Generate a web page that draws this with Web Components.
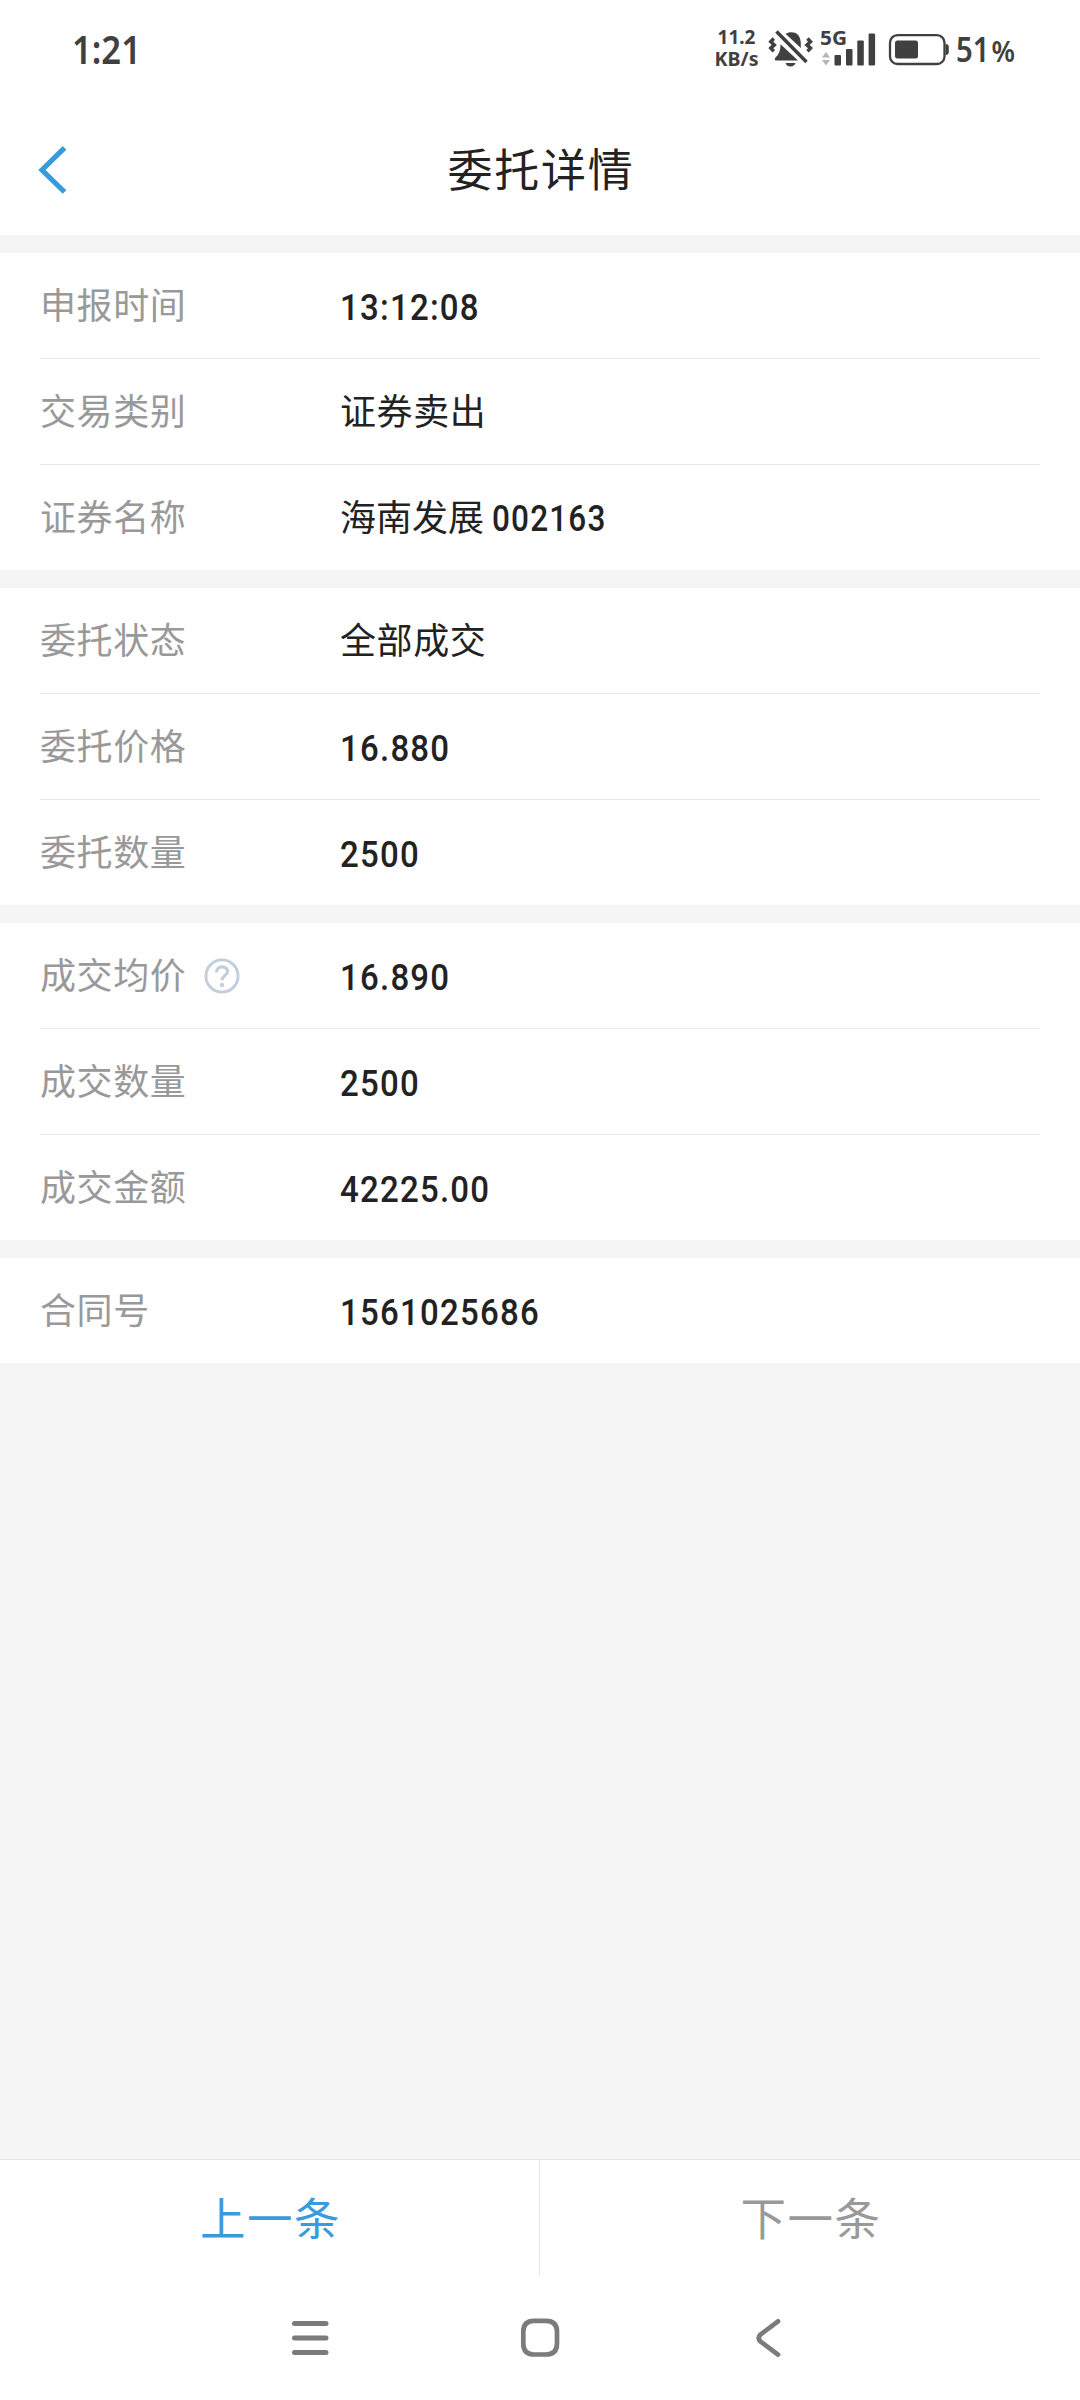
<!DOCTYPE html>
<html lang="zh-CN">
<head>
<meta charset="utf-8">
<title>委托详情</title>
<style>
html,body{margin:0;padding:0;background:#f5f5f5}
body{width:1080px;height:2400px;overflow:hidden;font-family:"Noto Sans CJK SC",sans-serif;color:#222}
</style>
</head>
<body>
<order-page></order-page>
<script>
const define=(name,html)=>{
  const t=document.createElement('template');t.innerHTML=html;
  customElements.define(name,class extends HTMLElement{
    constructor(){super();this.attachShadow({mode:'open'}).append(t.content.cloneNode(true));}
  });
};

define('status-bar',`<style>
:host{display:flex;height:100px;box-sizing:border-box;align-items:center;justify-content:space-between;padding:0 60px 0 70px;color:#404040;font-family:"Noto Sans",sans-serif;font-weight:600}
.icons{display:flex;align-items:center}
svg{display:block;flex:none}
</style>
<svg width="80" height="60" viewBox="70 20 80 60" fill="#404040" font-family="Noto Sans,sans-serif" font-weight="600"><text x="72" y="64" font-size="39" textLength="69" lengthAdjust="spacingAndGlyphs">1:21</text></svg>
<div class="icons">
<svg width="50" height="60" viewBox="711 20 50 60" fill="#404040" font-family="Noto Sans,sans-serif" font-weight="700" font-size="19"><text x="717.500" y="44" textLength="38" lengthAdjust="spacingAndGlyphs">11.2</text><text x="714.500" y="66" textLength="44" lengthAdjust="spacingAndGlyphs">KB/s</text></svg>
<svg width="56" height="60" viewBox="761 20 56 60" fill="#404040"><path d="M785.500 33.800C788 32 792 31.700 795 32.800C799 34.500 800.800 39 800.800 43.500V48ZM780.500 44.300L798 60.600H776C774.500 60.600 774.300 58.600 775.500 57.500C779 54.500 780.500 50.500 780.500 44.300ZM785.500 63H795.500Q794.500 66.400 790.500 66.400T785.500 63Z"/><path d="M776.500 31.500L806.500 62M773.800 38.500L770.800 41.700L774.300 44.900L770.800 48.100L773.800 51.300M807.500 38.500L810.500 41.700L807 44.900L810.500 48.100L807.500 51.300" fill="none" stroke="#404040" stroke-width="3.500"/></svg>
<svg width="66" height="60" viewBox="817 20 66 60" fill="#404040"><text x="820" y="45" font-family="Noto Sans,sans-serif" font-weight="700" font-size="19.500" textLength="27" lengthAdjust="spacingAndGlyphs">5G</text><path d="M822 57.500L826 52L830 57.500ZM822 60H830L826 65.500Z" fill="#b4b4b4"/><rect x="834.500" y="55" width="6.500" height="10.500" rx="1"/><rect x="846" y="49" width="6.500" height="16.500" rx="1"/><rect x="857.300" y="40.500" width="6.500" height="25" rx="1"/><rect x="868.600" y="33.500" width="6.500" height="32" rx="1"/></svg>
<svg width="71" height="60" viewBox="883 20 71 60"><rect x="890" y="35.200" width="54.500" height="28.800" rx="7.500" fill="none" stroke="#404040" stroke-width="2.300"/><rect x="895" y="40.500" width="23" height="18" rx="2.500" fill="#404040"/><path d="M945.500 44C947.800 44 948.800 45.200 948.800 47V52C948.800 54 947.800 55 945.500 55Z" fill="#404040"/></svg>
<svg width="66" height="60" viewBox="954 20 66 60" fill="#404040" font-family="Noto Sans,sans-serif"><text x="956" y="62" font-size="34.500" font-weight="600" textLength="33.500" lengthAdjust="spacingAndGlyphs">51</text><text x="991.500" y="62" font-size="28" font-weight="600" textLength="23.500" lengthAdjust="spacingAndGlyphs">%</text></svg>
</div>`);

define('nav-header',`<style>
:host{display:grid;grid-template-columns:100px 1fr 100px;align-items:center;height:135px;color:#222}
h1{margin:0;text-align:center;font:400 45px/60px "Noto Sans CJK SC",sans-serif;letter-spacing:1.700px;text-indent:2px}
svg{display:block}
</style>
<svg width="100" height="135" viewBox="0 100 100 135"><path d="M64.500 147.800L42 170L64.500 192" fill="none" stroke="#3a9bdc" stroke-width="5.200"/></svg>
<h1><slot></slot></h1>`);

define('info-group',`<style>
:host{display:flex;flex-direction:column;gap:1px;background:#fff;padding:0 40px;margin-top:18px}
::slotted(:not(:last-child)){box-shadow:0 1px #e9e9e9}
</style><slot></slot>`);

define('info-row',`<style>
:host{display:flex;align-items:center;height:105px;font-size:36px;letter-spacing:.600px;line-height:50px;white-space:nowrap}
.label{display:flex;align-items:center;width:300px;color:#999}
.label slot[name=label]{display:block;padding-bottom:5px}
.label slot[name=icon]{display:block;padding-left:18px}
.value{color:#222;padding-bottom:5px}
:host([tight]) .value{letter-spacing:0}
</style><div class="label"><slot name="label"></slot><slot name="icon"></slot></div><div class="value"><slot></slot></div>`);

define('din-number',`<style>
:host{display:inline-block;font:500 37.500px/50px Roboto,sans-serif;letter-spacing:1.400px;padding-top:8px;transform:scaleX(.88);transform-origin:0 50%}
:host([inline]){height:50px;margin:0 0 -10px 0;padding-top:0;vertical-align:top;transform:translateY(3px) scaleX(.84)}
</style><slot></slot>`);

define('help-icon',`<style>:host{display:block}svg{display:block}</style>
<svg width="36" height="36" viewBox="0 0 36 36" fill="none" stroke="#c2cedc"><circle cx="18" cy="18" r="16.100" stroke-width="2.900"/><path d="M12.500 14.500C12.500 7 23.800 7.200 23.500 13.800C23.300 17.500 18 17.500 18 22.300" stroke-width="3.200"/><circle cx="18" cy="27" r="2.200" fill="#c2cedc" stroke="none"/></svg>`);

define('pager-bar',`<style>
:host{display:flex;height:117px;box-sizing:border-box;border-top:1px solid #e6e6e6;background:#fff;font-size:45.500px;line-height:60px;letter-spacing:1.500px}
div{display:flex;align-items:center;justify-content:center;box-sizing:border-box;padding:0 0 5px 2px;width:540px}
.prev{color:#3a9bdc;border-right:1px solid #e6e6e6}
.next{color:#999}
</style><div class="prev"><slot name="prev"></slot></div><div class="next"><slot name="next"></slot></div>`);

define('system-nav',`<style>
:host{display:flex;justify-content:center;gap:170px;height:124px;background:#fff;align-items:center}
svg{display:block}
</style>
<svg width="60" height="60" viewBox="280 2308 60 60" stroke="#7b7b7b" stroke-width="5" stroke-linecap="round"><path d="M294.500 2323.500H326M294.500 2338H326M294.500 2352.500H326"/></svg>
<svg width="60" height="60" viewBox="510 2308 60 60" fill="none" stroke="#7b7b7b" stroke-width="4.700"><path d="M534 2320.800H546Q557 2320.800 557 2331.800V2343.500Q557 2354.500 546 2354.500H534Q523.300 2354.500 523.300 2343.500V2331.800Q523.300 2320.800 534 2320.800Z"/></svg>
<svg width="60" height="60" viewBox="740 2308 60 60" fill="none" stroke="#7b7b7b" stroke-width="4.700" stroke-linecap="round"><path d="M778 2321.300L760.500 2334.500Q757 2338 760.500 2341.500L778 2354.700"/></svg>`);

define('order-page',`<style>
:host{display:flex;flex-direction:column;width:1080px;height:2400px;background:#f5f5f5}
.top{background:#fff}
main{flex:1}
</style>
<div class="top"><status-bar></status-bar><nav-header>委托详情</nav-header></div>
<main>
<info-group>
<info-row><span slot="label">申报时间</span><din-number>13:12:08</din-number></info-row>
<info-row><span slot="label">交易类别</span>证券卖出</info-row>
<info-row tight><span slot="label">证券名称</span>海南发展 <din-number inline>002163</din-number></info-row>
</info-group>
<info-group>
<info-row><span slot="label">委托状态</span>全部成交</info-row>
<info-row><span slot="label">委托价格</span><din-number>16.880</din-number></info-row>
<info-row><span slot="label">委托数量</span><din-number>2500</din-number></info-row>
</info-group>
<info-group>
<info-row><span slot="label">成交均价</span><help-icon slot="icon"></help-icon><din-number>16.890</din-number></info-row>
<info-row><span slot="label">成交数量</span><din-number>2500</din-number></info-row>
<info-row><span slot="label">成交金额</span><din-number>42225.00</din-number></info-row>
</info-group>
<info-group>
<info-row><span slot="label">合同号</span><din-number>1561025686</din-number></info-row>
</info-group>
</main>
<pager-bar><span slot="prev">上一条</span><span slot="next">下一条</span></pager-bar>
<system-nav></system-nav>`);
</script>
</body>
</html>
